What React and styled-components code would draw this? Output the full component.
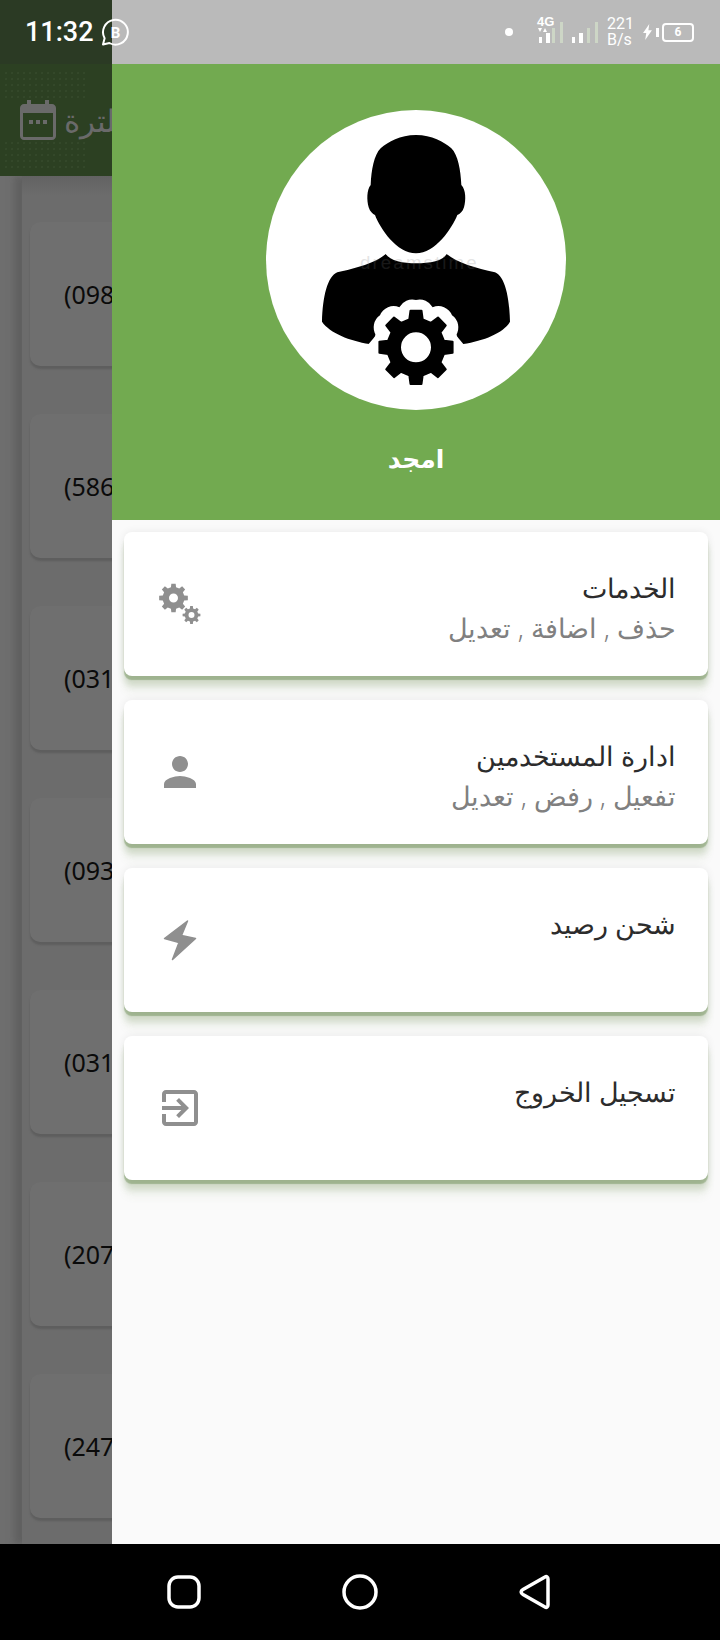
import styled, { createGlobalStyle } from "styled-components";

const rows = ["(0984", "(5861", "(0312", "(0933", "(0315", "(2071", "(2478"];

const menu = [
  { title: "الخدمات", sub: "حذف , اضافة , تعديل", icon: "cogs" },
  { title: "ادارة المستخدمين", sub: "تفعيل , رفض , تعديل", icon: "person" },
  { title: "شحن رصيد", sub: "", icon: "bolt" },
  { title: "تسجيل الخروج", sub: "", icon: "exit" },
];

// builds a gear outline, same shape for the avatar and the menu icon
const gearPath = (cx, cy, outer, inner, hole, teeth = 8) => {
  const step = (Math.PI * 2) / teeth;
  let d = "";
  for (let i = 0; i < teeth; i++) {
    const a = i * step - Math.PI / 2;
    const pts = [
      [inner, a - step * 0.3],
      [outer, a - step * 0.19],
      [outer, a + step * 0.19],
      [inner, a + step * 0.3],
    ];
    pts.forEach(([r, t], j) => {
      const x = (cx + r * Math.cos(t)).toFixed(2);
      const y = (cy + r * Math.sin(t)).toFixed(2);
      d += `${i === 0 && j === 0 ? "M" : "L"}${x} ${y} `;
    });
  }
  d += `Z M${cx - hole} ${cy} a${hole} ${hole} 0 1 0 ${hole * 2} 0 a${hole} ${hole} 0 1 0 ${-hole * 2} 0 Z`;
  return d;
};

const MenuIcon = ({ name }) => {
  if (name === "cogs") {
    return (
      <svg width="48" height="48" viewBox="0 0 48 48" fill="#8f8f8f" fillRule="evenodd">
        <path d={gearPath(17.5, 18, 14.5, 11, 4.5)} />
        <path d={gearPath(35.5, 35, 9, 6.8, 3)} />
      </svg>
    );
  }
  if (name === "person") {
    return (
      <svg width="48" height="48" viewBox="0 0 24 24" fill="#8f8f8f">
        <path d="M12 12c2.21 0 4-1.79 4-4s-1.79-4-4-4-4 1.79-4 4 1.79 4 4 4zm0 2c-2.67 0-8 1.34-8 4v2h16v-2c0-2.66-5.33-4-8-4z" />
      </svg>
    );
  }
  if (name === "bolt") {
    return (
      <svg width="48" height="48" viewBox="0 0 48 48" fill="#8f8f8f" stroke="#8f8f8f" strokeWidth="1.5" strokeLinejoin="round">
        <path d="M31.500 5L25.500 19.500L39.500 22.500L16.500 43.500L23 26.500L8.500 22.500Z" />
      </svg>
    );
  }
  return (
    <svg width="48" height="48" viewBox="0 0 24 24" fill="#8f8f8f">
      <path d="M10.09 15.59L11.5 17l5-5-5-5-1.41 1.41L12.67 11H3v2h9.67l-2.58 2.59zM19 3H5c-1.11 0-2 .9-2 2v4h2V5h14v14H5v-4H3v4c0 1.1.89 2 2 2h14c1.1 0 2-.9 2-2V5c0-1.1-.9-2-2-2z" />
    </svg>
  );
};

const App = () => {
  return (
    <>
      <GlobalStyle />
      <Screen>
        <StatusBar>
          <StatusLeft>
            <Time>11:32</Time>
            <svg width="28" height="28" viewBox="0 0 28 28" fill="none">
              <path d="M2 26.500l1.600-6.300A12.400 12.400 0 1 1 8.400 25z" stroke="#fff" strokeWidth="2" strokeLinejoin="round" />
              <BusinessMark x="14.500" y="19.500" textAnchor="middle">B</BusinessMark>
            </svg>
          </StatusLeft>
          <StatusRight>
            <Dot />
            <NetworkBlock>
              <NetworkLabel>4G</NetworkLabel>
              <svg width="64" height="28" viewBox="0 0 64 28">
                <path d="M1 12h4l-2 4zM6 16h4l-2-4z" fill="#fff" />
                <rect x="2" y="21" width="3" height="6" fill="#fff" />
                <rect x="9" y="17" width="4" height="10" fill="#fff" />
                <rect x="15" y="12" width="3" height="15" fill="#cdd6c6" />
                <rect x="23" y="6" width="3" height="21" fill="#cdd6c6" />
                <rect x="35" y="21" width="3" height="6" fill="#fff" />
                <rect x="42" y="17" width="4" height="10" fill="#fff" />
                <rect x="50" y="12" width="3" height="15" fill="#cdd6c6" />
                <rect x="58" y="6" width="3" height="21" fill="#cdd6c6" />
              </svg>
            </NetworkBlock>
            <Speed>
              <span>221</span>
              <span>B/s</span>
            </Speed>
            <svg width="9" height="16" viewBox="0 0 10 18" fill="#fff">
              <path d="M7 0L0 10h3.600L2.400 18 10 7H6z" />
            </svg>
            <BatteryNub />
            <Battery>6</Battery>
          </StatusRight>
        </StatusBar>

        <Body>
          <BackPage>
            <BackStatus />
            <BackToolbar>
              <svg width="36" height="40" viewBox="0 0 36 40" fill="#6a6a6a">
                <path fillRule="evenodd" d="M7 0h4v4h14V0h4v4h3c2.200 0 4 1.800 4 4v28c0 2.200-1.800 4-4 4H4c-2.200 0-4-1.800-4-4V8c0-2.200 1.800-4 4-4h3zM3 13v23c0 .6.400 1 1 1h28c.6 0 1-.4 1-1V13zM9 20h4v4H9zM16 20h4v4h-4zM23 20h4v4h-4z" />
              </svg>
              <BackLabel>فلترة</BackLabel>
            </BackToolbar>
            <BackList>
              {rows.map((r) => (
                <BackCard key={r}>{r}</BackCard>
              ))}
            </BackList>
          </BackPage>

          <Drawer>
            <DrawerStatus />
            <DrawerHeader>
              <Avatar>
                <svg width="300" height="300" viewBox="48 30 900 900">
                  <path d="M498 105C450 105 415 125 392 145C372 165 364 210 362 255C350 270 350 300 356 322C360 335 368 342 375 345C390 385 440 460 498 460C556 460 606 385 622 345C630 342 638 335 642 322C648 300 648 270 634 255C632 210 624 165 604 145C581 125 546 105 498 105Z" />
                  <path d="M407 462C420 482 460 490 498 490C540 490 580 482 590 462C620 488 680 505 735 517C765 530 778 590 780 665C760 700 700 722 640 732L358 732C300 722 240 700 216 665C218 590 232 530 262 517C316 505 380 488 407 462Z" />
                  <circle cx="498" cy="742" r="128" fill="#fff" />
                  <path d="M498 600a44 44 0 0 1 50 22a44 44 0 0 1 58 24a44 44 0 0 1 12 60L640 732L356 732L378 706a44 44 0 0 1 12-60a44 44 0 0 1 58-24a44 44 0 0 1 50-22Z" fill="#fff" />
                  <path d={gearPath(498, 742, 111, 86, 48)} fill="#000" fillRule="evenodd" stroke="#000" strokeWidth="6" strokeLinejoin="round" />
                  <Watermark x="505" y="508" textAnchor="middle" textLength="350">dreamstime</Watermark>
                </svg>
              </Avatar>
              <UserName>امجد</UserName>
            </DrawerHeader>

            <MenuList>
              {menu.map((m) => (
                <MenuCard key={m.title}>
                  <IconSlot>
                    <MenuIcon name={m.icon} />
                  </IconSlot>
                  <MenuText>
                    <MenuTitle>{m.title}</MenuTitle>
                    <MenuSub>{m.sub}</MenuSub>
                  </MenuText>
                </MenuCard>
              ))}
            </MenuList>
          </Drawer>
        </Body>

        <NavBar>
          <svg width="34" height="34" viewBox="0 0 34 34" fill="none" stroke="#fff" strokeWidth="3.500">
            <rect x="2" y="2" width="30" height="30" rx="9" />
          </svg>
          <svg width="36" height="36" viewBox="0 0 36 36" fill="none" stroke="#fff" strokeWidth="3.500">
            <circle cx="18" cy="18" r="16" />
          </svg>
          <svg width="32" height="36" viewBox="0 0 32 36" fill="none" stroke="#fff" strokeWidth="3.500" strokeLinejoin="round">
            <path d="M29 5c0-2-1.500-3-3-2L4 15.500c-2.500 1.500-2.500 3.500 0 5L26 33c1.500 1 3 0 3-2z" />
          </svg>
        </NavBar>
      </Screen>
    </>
  );
};

export default App;

// styling starts from here

const GlobalStyle = createGlobalStyle`
  html, body {
    margin: 0;
    padding: 0;
    background: #000;
  }
  * {
    box-sizing: border-box;
  }
`;

const Screen = styled.div`
  position: relative;
  width: 720px;
  height: 1640px;
  display: flex;
  flex-direction: column;
  overflow: hidden;
  font-family: "Noto Sans", "DejaVu Sans", sans-serif;
`;

const StatusBar = styled.div`
  position: absolute;
  top: 0;
  left: 0;
  right: 0;
  height: 64px;
  z-index: 2;
  display: flex;
  justify-content: space-between;
  align-items: center;
  padding: 0 26px 0 25px;
  color: #fff;
`;

const StatusLeft = styled.div`
  display: flex;
  align-items: center;
  gap: 7px;
`;

const Time = styled.span`
  font-family: Roboto, sans-serif;
  font-weight: 500;
  font-size: 27px;
`;

const BusinessMark = styled.text`
  font-family: Roboto, sans-serif;
  font-weight: 700;
  font-size: 15px;
  fill: #fff;
`;

const StatusRight = styled.div`
  display: flex;
  align-items: center;
`;

const Dot = styled.span`
  width: 8px;
  height: 8px;
  border-radius: 50%;
  background: #fff;
  margin-right: 24px;
`;

const NetworkBlock = styled.div`
  position: relative;
  width: 64px;
  height: 28px;
  margin-top: -4px;
  margin-right: 6px;
  svg {
    display: block;
  }
`;

const NetworkLabel = styled.span`
  position: absolute;
  top: 0;
  left: 0;
  font-family: "Liberation Sans", sans-serif;
  font-weight: 700;
  font-size: 13px;
  line-height: 12px;
`;

const Speed = styled.div`
  display: flex;
  flex-direction: column;
  width: 25px;
  font-family: Roboto, sans-serif;
  font-size: 16px;
  line-height: 16px;
  margin-right: 11px;
`;

const BatteryNub = styled.span`
  width: 3px;
  height: 9px;
  background: #fff;
  margin: 0 3px 0 4px;
`;

const Battery = styled.span`
  width: 32px;
  height: 19px;
  border: 2px solid #fff;
  border-radius: 4px;
  font-family: Roboto, sans-serif;
  font-weight: 700;
  font-size: 12px;
  line-height: 15px;
  text-align: center;
`;

const Body = styled.div`
  flex: 1;
  display: flex;
  min-height: 0;
`;

const BackPage = styled.div`
  width: 112px;
  flex-shrink: 0;
  overflow: hidden;
  display: flex;
  flex-direction: column;
  background: #6e6e6e;
`;

const BackStatus = styled.div`
  height: 64px;
  background-color: #2b3a24;
  background-image: radial-gradient(#35462d 0.6px, transparent 0.7px);
  background-size: 2px 2px;
`;

const BackToolbar = styled.div`
  position: relative;
  height: 112px;
  flex-shrink: 0;
  display: flex;
  align-items: center;
  gap: 8px;
  padding-left: 20px;
  background: #2c4022;

  svg {
    flex-shrink: 0;
  }

  &::before,
  &::after {
    content: "";
    position: absolute;
    left: 3px;
    width: 82px;
    background-image: radial-gradient(#465a3c 0.5px, transparent 0.8px);
    background-size: 6px 6px;
  }
  &::before {
    top: 6px;
    height: 28px;
  }
  &::after {
    bottom: 4px;
    height: 32px;
  }
`;

const BackLabel = styled.span`
  flex-shrink: 0;
  font-size: 31px;
  font-weight: 300;
  color: #6a6a6a;
  white-space: nowrap;
`;

const BackList = styled.div`
  flex: 1;
  display: flex;
  flex-direction: column;
  gap: 48px;
  margin-left: 22px;
  padding: 46px 0 0 8px;
  background: linear-gradient(#626262, #6c6c6c 20px);
  box-shadow: -8px 0 6px #616161;
`;

const BackCard = styled.div`
  width: 400px;
  height: 144px;
  flex-shrink: 0;
  display: flex;
  align-items: center;
  padding-left: 34px;
  border-radius: 10px;
  background: #6f6f6f;
  box-shadow: 0 3px 2px #5e5e5e;
  color: #0a0a0a;
  font-size: 25px;
  white-space: nowrap;
`;

const Drawer = styled.div`
  flex: 1;
  display: flex;
  flex-direction: column;
  background: #fafafa;
`;

const DrawerStatus = styled.div`
  height: 64px;
  background: #bababa;
`;

const DrawerHeader = styled.div`
  height: 456px;
  display: flex;
  flex-direction: column;
  align-items: center;
  padding-top: 46px;
  background: #72aa50;
`;

const Avatar = styled.div`
  width: 300px;
  height: 300px;
  border-radius: 50%;
  overflow: hidden;
  background: #fff;
  svg {
    display: block;
  }
`;

const Watermark = styled.text`
  font-family: "Liberation Sans", sans-serif;
  font-size: 56px;
  fill: #777;
  opacity: 0.2;
`;

const UserName = styled.div`
  margin-top: 28px;
  font-size: 25px;
  font-weight: 600;
  line-height: 40px;
  color: #fff;
`;

const MenuList = styled.div`
  display: flex;
  flex-direction: column;
  gap: 24px;
  padding: 12px 12px 0;
`;

const MenuCard = styled.div`
  height: 144px;
  display: flex;
  justify-content: space-between;
  align-items: flex-start;
  padding: 0 32px;
  border-radius: 8px;
  background: #fff;
  box-shadow: 0 4px 1px rgba(95, 130, 70, 0.42), 0 10px 6px rgba(95, 130, 70, 0.22), 0 17px 8px rgba(95, 130, 70, 0.06),
    0 0 8px rgba(0, 0, 0, 0.07);
`;

const IconSlot = styled.div`
  margin-top: 48px;
  width: 48px;
  height: 48px;
  svg {
    display: block;
  }
`;

const MenuText = styled.div`
  padding-top: 36px;
  direction: rtl;
  text-align: right;
`;

const MenuTitle = styled.div`
  font-size: 26.5px;
  font-weight: 300;
  line-height: 40px;
  color: #2c2c2c;
`;

const MenuSub = styled.div`
  font-size: 27px;
  font-weight: 300;
  line-height: 40px;
  color: #808080;
`;

const NavBar = styled.div`
  height: 96px;
  flex-shrink: 0;
  display: flex;
  align-items: center;
  background: #000;
  padding-left: 167px;
  gap: 141px;
`;
